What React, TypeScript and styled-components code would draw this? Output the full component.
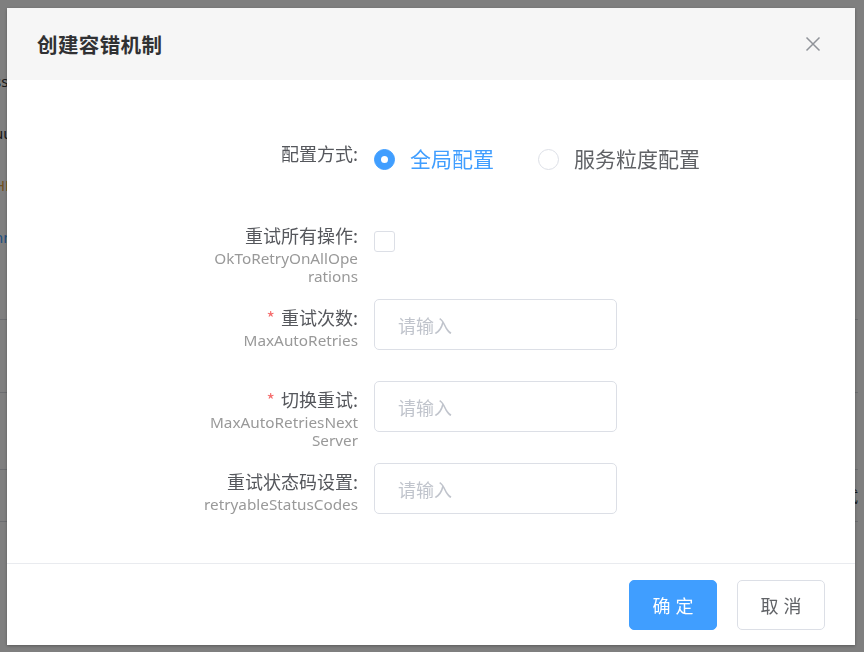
import React from "react";
import styled, { createGlobalStyle } from "styled-components";

const GlobalStyle = createGlobalStyle`
  html, body { margin: 0; padding: 0; }
  body {
    font-family: "Noto Sans", "Noto Sans CJK SC", sans-serif;
    background: #fff;
    overflow: hidden;
  }
  * { box-sizing: border-box; }
`;

const Page = styled.div`
  width: 864px;
  height: 652px;
  background: #fff;
  display: flex;
  flex-direction: column;
  padding-top: 54px;
  margin-left: -6px;
  font-family: "Noto Sans", "Noto Sans CJK SC", sans-serif;
`;

const BgRow = styled.div<{ $h: number; $line?: boolean }>`
  height: ${(p) => p.$h}px;
  flex: none;
  display: flex;
  align-items: center;
  justify-content: space-between;
  font-size: 15px;
  color: #333;
  border-bottom: ${(p) => (p.$line ? "1px solid #d8dbe0" : "none")};
`;

const BgText = styled.span<{ $c?: string }>`
  color: ${(p) => p.$c || "#333"};
`;

const Mask = styled.div`
  position: fixed;
  inset: 0;
  background: rgba(0, 0, 0, 0.5);
`;

const Dialog = styled.div`
  position: fixed;
  top: 8px;
  left: 7px;
  width: 848px;
  height: 637px;
  background: #fff;
  display: flex;
  flex-direction: column;
  box-shadow: 0 1px 3px rgba(0, 0, 0, 0.3);
  font-family: "Noto Sans", "Noto Sans CJK SC", sans-serif;
`;

const Header = styled.div`
  height: 72px;
  flex: none;
  background: #f6f6f6;
  display: flex;
  align-items: center;
  justify-content: space-between;
  padding: 0 34px 0 30px;
`;

const Title = styled.div`
  font-family: "Noto Sans CJK SC", sans-serif;
  font-size: 20.5px;
  font-weight: 700;
  color: #303133;
  letter-spacing: 0.4px;
`;

const CloseButton = styled.button`
  width: 16px;
  height: 16px;
  padding: 0;
  border: none;
  background: none;
  display: flex;
  cursor: pointer;
`;

const Body = styled.div`
  flex: 1;
  padding-top: 55px;
  display: flex;
  flex-direction: column;
  gap: 31px;
`;

const FormItem = styled.div`
  display: flex;
  height: 51px;
`;

const Label = styled.div`
  width: 367px;
  flex: none;
  padding-right: 16px;
  text-align: right;
  position: relative;
  z-index: 1;
`;

const LabelMain = styled.div`
  padding-top: 6px;
  font-family: "Noto Sans CJK SC", sans-serif;
  font-size: 18px;
  line-height: 25px;
  height: 32px;
  color: #55575c;
  white-space: nowrap;
`;

const Star = styled.span`
  color: #f56c6c;
  margin-right: 6px;
`;

const LabelSub = styled.div`
  font-family: "Noto Sans", "Noto Sans CJK SC", sans-serif;
  font-size: 15.3px;
  line-height: 18px;
  color: #999;
  white-space: nowrap;
`;

const Control = styled.div`
  display: flex;
  align-items: center;
`;

const RadioItem = styled.label<{ $checked?: boolean }>`
  display: flex;
  align-items: center;
  gap: 15px;
  margin-right: 44px;
  margin-top: -2px;
  font-family: "Noto Sans CJK SC", sans-serif;
  font-size: 21px;
  line-height: 24px;
  color: ${(p) => (p.$checked ? "#409eff" : "#606266")};
  cursor: pointer;
`;

const RadioText = styled.span`
  margin-top: -3px;
`;

const RadioDot = styled.span<{ $checked?: boolean }>`
  width: 21px;
  height: 21px;
  flex: none;
  border-radius: 50%;
  border: 1px solid ${(p) => (p.$checked ? "#409eff" : "#dcdfe6")};
  background: ${(p) => (p.$checked ? "#409eff" : "#fff")};
  display: flex;
  align-items: center;
  justify-content: center;
  &::after {
    content: "";
    width: 7px;
    height: 7px;
    border-radius: 50%;
    background: #fff;
    display: ${(p) => (p.$checked ? "block" : "none")};
  }
`;

const CheckBox = styled.span`
  width: 21px;
  height: 21px;
  border: 1px solid #dcdfe6;
  border-radius: 3px;
  background: #fff;
  margin-top: -3px;
`;

const Input = styled.input`
  width: 243px;
  height: 51px;
  border: 1px solid #dcdfe6;
  border-radius: 5px;
  padding: 0 23px;
  font-family: "Noto Sans CJK SC", sans-serif;
  font-size: 18px;
  color: #606266;
  outline: none;
  background: #fff;
  &::placeholder {
    color: #c0c4cc;
  }
`;

const Footer = styled.div`
  flex: none;
  border-top: 1px solid #e9ebef;
  padding: 16px 30px 15px;
  display: flex;
  justify-content: flex-end;
  gap: 20px;
`;

const Button = styled.button<{ $primary?: boolean }>`
  width: 88px;
  height: 50px;
  border-radius: 5px;
  border: 1px solid ${(p) => (p.$primary ? "#409eff" : "#dcdfe6")};
  background: ${(p) => (p.$primary ? "#409eff" : "#fff")};
  color: ${(p) => (p.$primary ? "#fff" : "#606266")};
  font-family: "Noto Sans CJK SC", sans-serif;
  font-size: 18px;
  letter-spacing: 5px;
  padding: 0 0 0 5px;
  cursor: pointer;
`;

type Field = {
  label: string;
  sub: string[];
  required?: boolean;
};

const inputFields: Field[] = [
  { label: "重试次数:", sub: ["MaxAutoRetries"], required: true },
  { label: "切换重试:", sub: ["MaxAutoRetriesNext", "Server"], required: true },
  { label: "重试状态码设置:", sub: ["retryableStatusCodes"] },
];

export default function App() {
  return (
    <>
      <GlobalStyle />
      <Page>
        <BgRow $h={53}>
          <BgText>ss</BgText>
        </BgRow>
        <BgRow $h={52}>
          <BgText>uu</BgText>
        </BgRow>
        <BgRow $h={52}>
          <BgText $c="#e6a23c">HH</BgText>
        </BgRow>
        <BgRow $h={52}>
          <BgText $c="#409eff">nn</BgText>
        </BgRow>
        <BgRow $h={57} $line />
        <BgRow $h={73} $line />
        <BgRow $h={77} $line />
        <BgRow $h={52} $line>
          <span />
          <BgText>试试</BgText>
        </BgRow>
      </Page>
      <Mask />
      <Dialog>
        <Header>
          <Title>创建容错机制</Title>
          <CloseButton aria-label="close">
            <svg width="16" height="16" viewBox="0 0 16 16">
              <path
                d="M1.5 1.5 L14.5 14.5 M14.5 1.5 L1.5 14.5"
                stroke="#909399"
                strokeWidth="1.5"
                fill="none"
              />
            </svg>
          </CloseButton>
        </Header>
        <Body>
          <FormItem>
            <Label>
              <LabelMain>配置方式:</LabelMain>
            </Label>
            <Control>
              <RadioItem $checked>
                <RadioDot $checked />
                <RadioText>全局配置</RadioText>
              </RadioItem>
              <RadioItem>
                <RadioDot />
                <RadioText>服务粒度配置</RadioText>
              </RadioItem>
            </Control>
          </FormItem>
          <FormItem>
            <Label>
              <LabelMain>重试所有操作:</LabelMain>
              <LabelSub>OkToRetryOnAllOpe</LabelSub>
              <LabelSub>rations</LabelSub>
            </Label>
            <Control>
              <CheckBox />
            </Control>
          </FormItem>
          {inputFields.map((f) => (
            <FormItem key={f.label}>
              <Label>
                <LabelMain>
                  {f.required && <Star>*</Star>}
                  {f.label}
                </LabelMain>
                {f.sub.map((s) => (
                  <LabelSub key={s}>{s}</LabelSub>
                ))}
              </Label>
              <Control>
                <Input placeholder="请输入" />
              </Control>
            </FormItem>
          ))}
        </Body>
        <Footer>
          <Button $primary>确定</Button>
          <Button>取消</Button>
        </Footer>
      </Dialog>
    </>
  );
}
